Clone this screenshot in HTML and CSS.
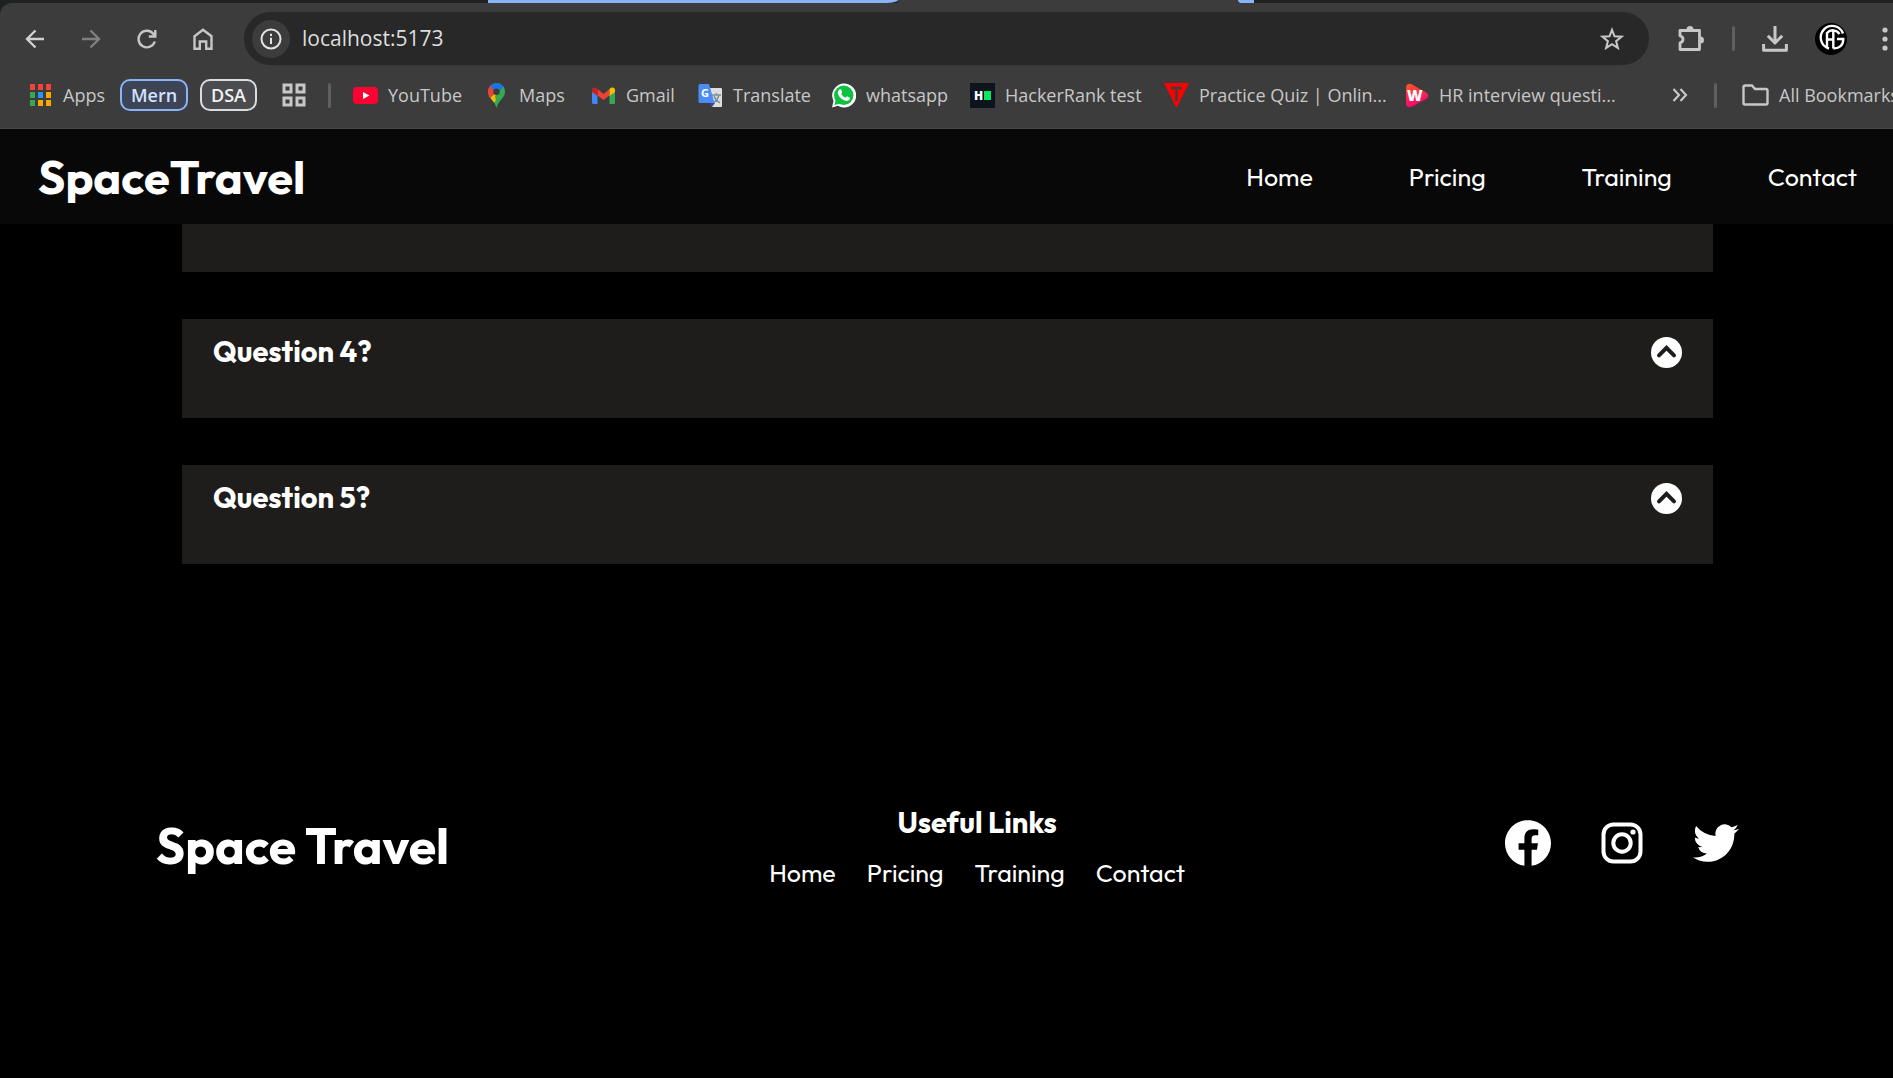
FILE: index.html
```html
<!DOCTYPE html>
<html lang="en">
<head>
<meta charset="utf-8">
<meta name="viewport" content="width=device-width, initial-scale=1">
<title>SpaceTravel</title>
<link rel="stylesheet" href="styles.css">
</head>
<body>
<div class="browser">
  <div class="tab-strip"><span class="tab-group"></span><span class="tab-active"></span><span class="tab-group tab-group-end"></span></div>
  <div class="chrome">
    <div class="toolbar">
      <div class="nav-buttons">
        <button class="tool" aria-label="Back"><svg width="20" height="20" viewBox="0 0 20 20" fill="none" stroke="#d0d0d0" stroke-width="2.4"><path d="M19 10H2M10.500 1.500L2 10l8.500 8.500"/></svg></button>
        <button class="tool" aria-label="Forward"><svg width="20" height="20" viewBox="0 0 20 20" fill="none" stroke="#7f7f7f" stroke-width="2.400"><path d="M1 10h17M9.500 1.500L18 10l-8.500 8.500"/></svg></button>
        <button class="tool" aria-label="Reload"><svg width="20" height="20" viewBox="0 0 20 20" fill="none" stroke="#c7c7c7" stroke-width="2.400"><path d="M17.800 12.500A8.300 8.300 0 1 1 16.500 5L18 7M18.300 1v6.500h-6.500"/></svg></button>
        <button class="tool" aria-label="Home"><svg width="20" height="22" viewBox="0 0 20 22" fill="none" stroke="#c7c7c7" stroke-width="2.400"><path d="M1.500 8.200L10 1.700l8.500 6.500v12.500h-5.300v-7.200H6.800v7.200H1.500z"/></svg></button>
      </div>
      <div class="omnibox">
        <button class="site-info" aria-label="Site information"><svg width="22" height="22" viewBox="0 0 22 22" fill="none" stroke="#e3e3e3" stroke-width="2"><circle cx="11" cy="11" r="9.500"/><path d="M11 9.700V16M11 5.700v2.200"/></svg></button>
        <input class="url" type="text" value="localhost:5173" aria-label="Address">
        <button class="star" aria-label="Bookmark this page"><svg width="24" height="24" viewBox="0 0 24 24" fill="none" stroke="#c7c7c7" stroke-width="2"><path d="M12 2.800l2.500 6.500 7 .4-5.400 4.400 1.800 6.800L12 17.100l-5.900 3.800 1.800-6.800L2.500 9.700l7-.4z"/></svg></button>
      </div>
      <div class="tool-actions">
        <button class="tool" aria-label="Extensions"><svg width="28" height="28" viewBox="0 0 28 28"><path d="M3 5.500h19.500v19H3v-6.700c4-1 4-6 0-7z" fill="none" stroke="#c7c7c7" stroke-width="2.800" stroke-linejoin="round"/><path d="M9.500 4.500a3.500 3.500 0 0 1 7 0zM23.500 11.500a3.500 3.500 0 0 1 0 7z" fill="#c7c7c7"/></svg></button>
        <span class="divider"></span>
        <button class="tool" aria-label="Downloads"><svg width="26" height="26" viewBox="0 0 26 26" fill="none" stroke="#c7c7c7" stroke-width="3"><path d="M13 0v16M5.800 9.800L13 17l7.200-7.200M1.600 18v6.200h22.800V18" stroke-linejoin="round"/></svg></button>
        <button class="tool" aria-label="Profile"><svg width="32" height="32" viewBox="0 0 32 32"><circle cx="16" cy="16" r="16" fill="#000"/><g fill="none" stroke="#fff" stroke-width="2.400"><path d="M28 10.500A11.500 11.500 0 1 0 14 25.500M24.500 11A7.800 7.800 0 0 0 12 10v14M18.300 7.500v18M12 16.500h6.300M18.300 25.300c6 .5 10-3 10-9.300H22"/></g></svg></button>
        <button class="tool tool-menu" aria-label="Menu"><svg width="6" height="24" viewBox="0 0 6 24" fill="#c7c7c7"><circle cx="3" cy="3" r="2.600"/><circle cx="3" cy="12" r="2.600"/><circle cx="3" cy="21" r="2.600"/></svg></button>
      </div>
    </div>
    <nav class="bookmarks" aria-label="Bookmarks">
      <a class="mark mark-apps" href="#"><svg width="21" height="22" viewBox="0 0 21 22"><path d="M0 0h5v6H0zM8 0h5v6H8zM16 0h5v6h-5z" fill="#f44336"/><path d="M0 8h5v6H0zM0 16h5v6H0z" fill="#34a853"/><path d="M8 8h5v6H8z" fill="#2196f3"/><path d="M16 8h5v6h-5zM8 16h5v6H8zM16 16h5v6h-5z" fill="#f9a800"/></svg>Apps</a>
      <button class="group group-blue">Mern</button>
      <button class="group">DSA</button>
      <button class="tool" aria-label="Tab groups"><svg width="24" height="24" viewBox="0 0 24 24" fill="none" stroke="#c7c7c7" stroke-width="3"><path d="M2 2h7v7H2zM15 2h7v7h-7zM2 15h7v7H2zM15 15h7v7h-7z"/></svg></button>
      <span class="divider"></span>
      <a class="mark" href="#"><svg width="25" height="25" viewBox="0 0 25 25"><rect y="4" width="25" height="17" rx="4" fill="#f03"/><path d="M10 9l6.500 3.500L10 16z" fill="#fff"/></svg>YouTube</a>
      <a class="mark" href="#"><svg width="25" height="25" viewBox="0 0 25 25"><clipPath id="pin"><path d="M12.500 0a8.500 8.500 0 0 1 8.500 9c0 6-6.500 8-8.500 16C10.500 17 4 15 4 9a8.500 8.500 0 0 1 8.500-9z"/></clipPath><g clip-path="url(#pin)"><path d="M0 0h25v25H0z" fill="#34a853"/><path d="M0 16L12 9l4 4L7 23H0z" fill="#fbbc04"/><path d="M0 0h8l5 9-9 8H0z" fill="#ea4335"/><path d="M6 2l6-2h8v4l-7 8z" fill="#1a73e8"/><path d="M20 3l1 4-9 11-1-5z" fill="#34a853"/></g><circle cx="12.500" cy="8.700" r="3.200" fill="#3c3c3c"/></svg>Maps</a>
      <a class="mark" href="#"><svg width="25" height="25" viewBox="0 0 25 25"><path d="M1 8l5.500 4v9H2.500A1.500 1.500 0 0 1 1 19.500z" fill="#4285f4"/><path d="M24 8l-5.500 4v9h4a1.500 1.500 0 0 0 1.500-1.500z" fill="#34a853"/><path d="M6.500 6l6 5 6-5v6.500l-6 4.500-6-4.500z" fill="#ea4335"/><path d="M18.500 6c3-3 5.500-1 5.500 1v2l-5.500 4z" fill="#fbbc04"/><path d="M6.500 6C3.500 3 1 5 1 7v2l5.500 4z" fill="#c5221f"/></svg>Gmail</a>
      <a class="mark" href="#"><svg width="25" height="25" viewBox="0 0 25 25"><path d="M12 5h11a1 1 0 0 1 1 1v17a1 1 0 0 1-1 1h-9z" fill="#dedede"/><path d="M14 12h9M18.500 10v2M21 12c-1 4-3 6-6 8M16 13c1 3 3 5 6 7" fill="none" stroke="#78909c" stroke-width="1.400"/><path d="M12 20h5l-3 4z" fill="#3949ab"/><path d="M2 1h9l5.500 19H2a1.500 1.500 0 0 1-1.500-1.500v-16A1.500 1.500 0 0 1 2 1z" fill="#4d8bf5"/><text x="3" y="14" class="glyph glyph-g">G</text></svg>Translate</a>
      <a class="mark" href="#"><svg width="25" height="25" viewBox="0 0 25 25"><path d="M1 24.500l1.500-6.500A12 12 0 1 1 7 22.800z" fill="#fff"/><circle cx="12.700" cy="12.300" r="9.700" fill="#0dc143"/><path d="M3.500 22l1.200-5 3.800 3.700z" fill="#0dc143"/><path d="M8.500 6.500c1-.7 1.700-.2 2.100.9l.5 1.400c.2.700-.4 1.200-.9 1.900 1 1.900 2.400 3.200 4.500 4 .8-1 1.100-1.600 1.800-1.300l2 1c.8.500.3 2-.5 2.700-1.500 1.300-3.800.9-6-.3-2.500-1.400-4.800-4-5.200-6.500-.2-1.600.7-3 1.700-3.800z" fill="#fff"/></svg>whatsapp</a>
      <a class="mark" href="#"><svg width="25" height="25" viewBox="0 0 25 25"><path d="M0 0h25v25H0z" fill="#0e141e"/><path d="M14 8h7v9h-7z" fill="#00ea64"/><text x="4" y="17" class="glyph glyph-h">H</text></svg>HackerRank test</a>
      <a class="mark" href="#"><svg width="25" height="25" viewBox="0 0 25 25"><path d="M0 0h25L12.500 25z" fill="#f00"/><path d="M7 5h11M12.500 5v13" stroke="#3c3c3c" stroke-width="2.500"/></svg>Practice Quiz | Onlin...</a>
      <a class="mark" href="#"><svg width="25" height="25" viewBox="0 0 25 25"><linearGradient id="ws" x2="0.300" y2="1"><stop stop-color="#ff5a1f"/><stop offset="1" stop-color="#ff0078"/></linearGradient><path d="M2 5c0-4 3-5 6-3.500l14 8c3 2 3 4.500 0 6.500L8 23.500C5 25 2 24 2 20.500z" fill="url(#ws)"/><text x="3" y="18" class="glyph glyph-w">W</text></svg>HR interview questi...</a>
      <button class="tool" aria-label="More bookmarks"><svg width="16" height="14" viewBox="0 0 16 14" fill="none" stroke="#c7c7c7" stroke-width="2.200"><path d="M1.500 1L7 7l-5.500 6M8.500 1L14 7l-5.500 6"/></svg></button>
      <span class="divider"></span>
      <a class="mark" href="#"><svg width="27" height="22" viewBox="0 0 27 22" fill="none" stroke="#c7c7c7" stroke-width="2.400"><path d="M1.500 3a1.500 1.500 0 0 1 1.500-1.500h7l3 3.500h11a1.500 1.500 0 0 1 1.500 1.500V19a1.500 1.500 0 0 1-1.500 1.500H3A1.500 1.500 0 0 1 1.500 19z"/></svg>All Bookmarks</a>
    </nav>
  </div>
</div>

<header class="header">
  <a class="logo" href="#">SpaceTravel</a>
  <nav class="menu" aria-label="Main">
    <a href="#">Home</a><a href="#">Pricing</a><a href="#">Training</a><a href="#">Contact</a>
  </nav>
</header>

<main class="questions">
  <section class="card card-tail"></section>
  <section class="card"><h3><button class="question">Question 4?<svg width="31" height="31" viewBox="0 0 31 31"><circle cx="15.500" cy="15.500" r="15.500" fill="#fff"/><path d="M8 18.300l7.500-7.500 7.500 7.500" fill="none" stroke="#1e1d1b" stroke-width="4" stroke-linecap="round"/></svg></button></h3></section>
  <section class="card"><h3><button class="question">Question 5?<svg width="31" height="31" viewBox="0 0 31 31"><circle cx="15.500" cy="15.500" r="15.500" fill="#fff"/><path d="M8 18.300l7.500-7.500 7.500 7.500" fill="none" stroke="#1e1d1b" stroke-width="4" stroke-linecap="round"/></svg></button></h3></section>
</main>

<footer class="footer">
  <a class="footer-logo" href="#">Space Travel</a>
  <div class="links">
    <h4>Useful Links</h4>
    <nav class="link-row" aria-label="Useful links"><a href="#">Home</a><a href="#">Pricing</a><a href="#">Training</a><a href="#">Contact</a></nav>
  </div>
  <div class="social">
    <a href="#" aria-label="Facebook"><svg width="46" height="46" viewBox="0 0 24 24" fill="#fff"><path d="M24 12.073c0-6.627-5.373-12-12-12s-12 5.373-12 12c0 5.990 4.388 10.954 10.125 11.854v-8.385H7.078v-3.470h3.047V9.430c0-3.007 1.792-4.669 4.533-4.669 1.312 0 2.686.235 2.686.235v2.953H15.830c-1.491 0-1.956.925-1.956 1.874v2.250h3.328l-.532 3.470h-2.796v8.385C19.612 23.027 24 18.062 24 12.073z"/></svg></a>
    <a href="#" aria-label="Instagram"><svg width="46" height="46" viewBox="0 0 46 46" fill="none" stroke="#fff" stroke-width="4"><rect x="4.500" y="4.500" width="37" height="37" rx="10"/><circle cx="23" cy="23" r="8.700"/><circle cx="34" cy="12" r="2.600" fill="#fff" stroke="none"/></svg></a>
    <a href="#" aria-label="Twitter"><svg width="46" height="46" viewBox="0 0 24 24" fill="#fff"><path d="M23.953 4.570a10 10 0 01-2.825.775 4.958 4.958 0 002.163-2.723c-.951.555-2.005.959-3.127 1.184a4.920 4.920 0 00-8.384 4.482C7.690 8.095 4.067 6.130 1.640 3.162a4.822 4.822 0 00-.666 2.475c0 1.710.870 3.213 2.188 4.096a4.904 4.904 0 01-2.228-.616v.060a4.923 4.923 0 003.946 4.827 4.996 4.996 0 01-2.212.085 4.936 4.936 0 004.604 3.417 9.867 9.867 0 01-6.102 2.105c-.390 0-.779-.023-1.170-.067a13.995 13.995 0 007.557 2.209c9.053 0 13.998-7.496 13.998-13.985 0-.210 0-.420-.015-.630A9.935 9.935 0 0024 4.590z"/></svg></a>
  </div>
</footer>
</body>
</html>
```
FILE: styles.css
```css
* { box-sizing: border-box; }

body {
  margin: 0;
  min-height: 100vh;
  background: #000;
  color: #fff;
  font-family: Outfit, Lato, sans-serif;
}

a { color: inherit; text-decoration: none; }
h3, h4 { margin: 0; }
svg { display: block; flex: none; }
button {
  margin: 0;
  padding: 0;
  border: 0;
  background: none;
  color: inherit;
  font: inherit;
  cursor: pointer;
}

/* Browser frame */
.browser {
  overflow: hidden;
  background: #1f2221;
  font-family: "Segoe UI", "Open Sans", sans-serif;
  color: #c7c7c7;
}
.tab-strip {
  display: flex;
  height: 3px;
  padding-left: 488px;
}
.tab-group {
  width: 410px;
  background: #8ab4f8;
  border-bottom-right-radius: 12px 3px;
}
.tab-active { width: 340px; background: #3c3c3c; }
.tab-group-end { width: 16px; border-radius: 0 0 0 12px; }
.chrome {
  background: #3c3c3c;
  border-bottom: 1px solid #4a4a4a;
  border-top-left-radius: 12px;
}
.toolbar {
  display: flex;
  align-items: center;
  padding: 9px 5px 0 25px;
}
.tool { display: flex; align-items: center; }
.tool-menu { padding-left: 8px; }
.nav-buttons { display: flex; align-items: center; gap: 36px; margin-right: 31px; }
.omnibox {
  flex: 1;
  display: flex;
  align-items: center;
  height: 53px;
  padding: 0 25px 0 8px;
  border-radius: 27px;
  background: #282828;
}
.site-info {
  display: grid;
  place-items: center;
  width: 38px;
  height: 38px;
  border-radius: 50%;
  background: #3c3c3c;
}
.url {
  flex: 1;
  min-width: 0;
  margin-left: 12px;
  padding: 0 0 2px;
  border: 0;
  outline: 0;
  background: none;
  color: #dedede;
  font: 21px/28px "Segoe UI", "Open Sans", sans-serif;
}
.tool-actions { display: flex; align-items: center; gap: 27px; margin-left: 28px; }
.divider { width: 3px; height: 25px; border-radius: 2px; background: #5f5f5f; }

.bookmarks {
  display: grid;
  grid-template-columns: 90px 80px 82px 46px 25px 131px 107px 107px 133px 139px 194px 240px 1fr 42px 28px 151px;
  align-items: center;
  justify-items: start;
  height: 63px;
  padding: 0 0 3px 30px;
}
.mark {
  display: flex;
  align-items: center;
  gap: 10px;
  font-size: 18px;
  line-height: 26px;
  white-space: nowrap;
}
.mark-apps { gap: 12px; }
.group {
  height: 32px;
  padding: 0 9px;
  border: 2px solid #dadce0;
  border-radius: 10px;
  background: #4b4c4f;
  color: #f1f3f4;
  font-size: 18px;
  font-weight: 600;
  line-height: 26px;
}
.group-blue { border-color: #8ab4f8; background: #3c4456; color: #d3e3fd; }
.glyph { fill: #fff; font-family: "Open Sans", sans-serif; font-weight: 700; }
.glyph-g { font-size: 11px; }
.glyph-h { font-size: 12px; font-weight: 800; }
.glyph-w { font-size: 15px; font-weight: 800; }

/* Site header */
.header {
  display: flex;
  align-items: center;
  justify-content: space-between;
  height: 95px;
  padding: 0 36px 0 38px;
  background: #080808;
}
.logo { font-size: 47px; font-weight: 700; line-height: 60px; }
.menu { display: flex; gap: 96px; font-size: 25px; line-height: 32px; }

/* Questions */
.questions {
  display: grid;
  gap: 47px;
  padding: 0 180px 0 182px;
}
.card { min-height: 99px; padding: 15px 31px; background: #1e1d1b; }
.card-tail { min-height: 48px; }
.question {
  display: flex;
  align-items: center;
  justify-content: space-between;
  width: 100%;
  font-size: 29px;
  font-weight: 700;
  line-height: 36px;
}

/* Footer */
.footer {
  display: flex;
  align-items: center;
  justify-content: space-between;
  padding: 239px 154px 180px 156px;
}
.footer-logo { font-size: 50px; font-weight: 700; line-height: 64px; }
.links { text-align: center; }
.links h4 { font-size: 29px; line-height: 40px; }
.link-row {
  display: flex;
  gap: 31px;
  margin-top: 14px;
  font-size: 25px;
  line-height: 32px;
}
.social { display: flex; gap: 48px; padding-bottom: 6px; }
```
